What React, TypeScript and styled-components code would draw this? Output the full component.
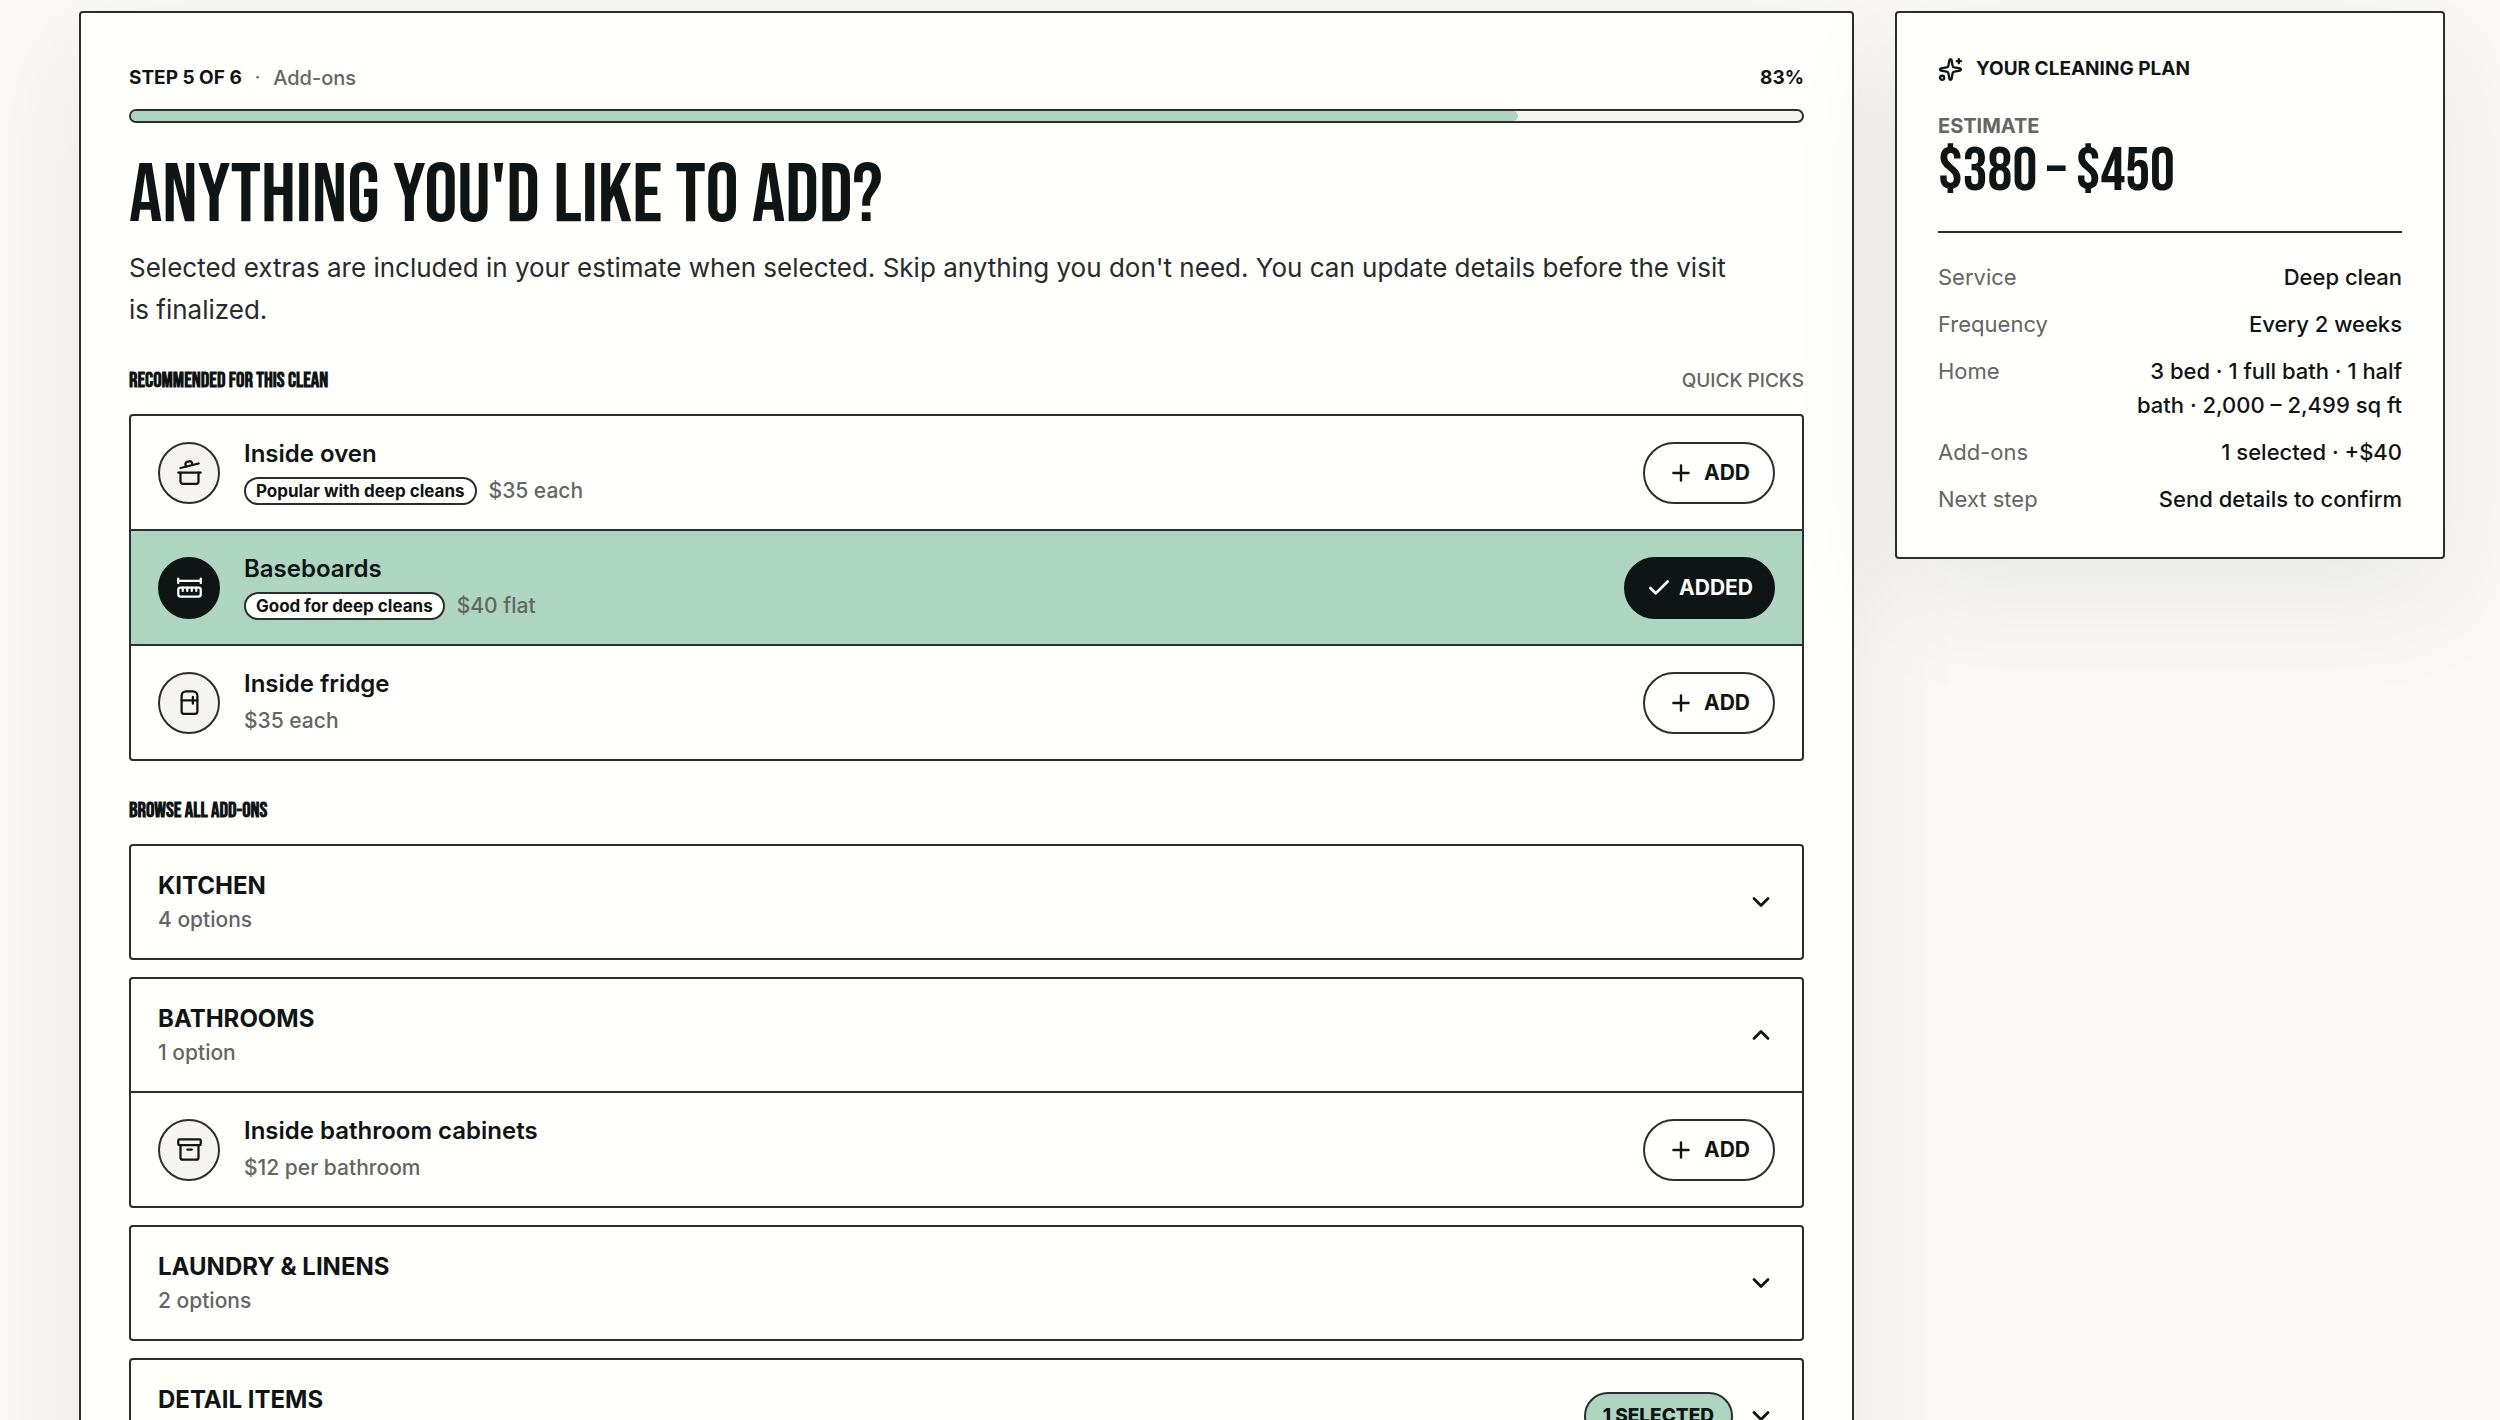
import React, { useState } from "react";
import styled, { createGlobalStyle } from "styled-components";
import {
  Archive,
  Check,
  ChevronDown,
  ChevronUp,
  CookingPot,
  Plus,
  Refrigerator,
  RulerDimensionLine,
  Sparkles,
  type LucideIcon,
} from "lucide-react";

const ink = "#0f1415";
const line = "#2a2e2f";
const muted = "#626664";
const paper = "#fffffc";
const sand = "#f6f4f0";
const mint = "#aed5bf";
const display = '"Bebas Neue", "Roboto Condensed", "Liberation Sans Narrow", sans-serif';

const GlobalStyle = createGlobalStyle`
  *, *::before, *::after { box-sizing: border-box; }
  body {
    margin: 0;
    background: #faf9f5;
    color: ${ink};
    font-family: Inter, "Liberation Sans", sans-serif;
    font-size: 20px;
    -webkit-font-smoothing: antialiased;
  }
  h1, h2, h3, p, ul, dl, dd { margin: 0; padding: 0; }
  ul { list-style: none; }
  button { font: inherit; color: inherit; cursor: pointer; }
`;

const Page = styled.div`
  display: grid;
  grid-template-columns: minmax(0, 1fr) 550px;
  gap: 41px;
  align-items: start;
  height: 100vh;
  overflow: hidden;
  padding: 11px 55px 0 79px;
`;

const Card = styled.section`
  background: ${paper};
  border: 2px solid ${line};
  border-radius: 4px;
  box-shadow: 0 38px 115px rgba(15, 20, 21, 0.08);
`;

const Wizard = styled(Card)`
  padding: 50px 48px 48px;
`;

const Between = styled.div`
  display: flex;
  align-items: center;
  justify-content: space-between;
`;

const StepRow = styled(Between)`
  line-height: 30px;
  font-size: 19px;
`;

const StepLabel = styled.div`
  display: flex;
  gap: 13px;
  color: ${muted};
`;

const StepName = styled.span`
  font-size: 20px;
  font-weight: 500;
`;

const Strong = styled.strong`
  font-weight: 700;
  color: ${ink};
`;

const Track = styled.div`
  height: 14px;
  margin-top: 16px;
  border: 2px solid ${line};
  border-radius: 7px;
  background: ${sand};
  overflow: hidden;
`;

const Fill = styled.div`
  height: 100%;
  border-radius: 7px;
  background: ${mint};
`;

const Title = styled.h1`
  margin-top: 29px;
  font-family: ${display};
  font-size: 83px;
  line-height: 88px;
  font-weight: 400;
`;

const Intro = styled.p`
  max-width: 1600px;
  margin-top: 7px;
  font-size: 26px;
  line-height: 42px;
  color: #272b2c;
`;

const SectionHead = styled(Between)`
  margin-top: 34px;
  margin-bottom: 17px;
  line-height: 32px;
`;

const SectionTitle = styled.h2`
  font-family: ${display};
  font-size: 21px;
  font-weight: 700;
`;

const SectionNote = styled.span`
  font-size: 19px;
  font-weight: 500;
  color: ${muted};
`;

const Panel = styled.div`
  border: 2px solid ${line};
  border-radius: 4px;
  overflow: hidden;
`;

const Stack = styled.div`
  display: grid;
  gap: 17px;
`;

const AddonRow = styled.li<{ $on?: boolean }>`
  display: flex;
  align-items: center;
  gap: 24px;
  min-height: 113px;
  padding: 0 27px;
  background: ${(p) => (p.$on ? mint : "transparent")};

  & + & {
    min-height: 115px;
    border-top: 2px solid ${line};
  }
`;

const IconDisc = styled.span<{ $on?: boolean }>`
  display: grid;
  place-items: center;
  flex: none;
  width: 62px;
  height: 62px;
  border: 2px solid ${(p) => (p.$on ? ink : line)};
  border-radius: 50%;
  background: ${(p) => (p.$on ? ink : sand)};
  color: ${(p) => (p.$on ? paper : ink)};
`;

const AddonText = styled.div`
  flex: 1;
  min-width: 0;
`;

const AddonName = styled.h3`
  font-size: 24px;
  line-height: 36px;
  font-weight: 600;
`;

const AddonMeta = styled.div`
  display: flex;
  align-items: center;
  gap: 12px;
  min-height: 37px;
`;

const Tag = styled.span`
  padding: 0 10px;
  border: 2px solid ${line};
  border-radius: 14px;
  background: ${paper};
  font-size: 17px;
  line-height: 24px;
  font-weight: 700;
`;

const Price = styled.span`
  font-size: 21px;
  font-weight: 500;
  color: ${muted};
`;

const AddButton = styled.button<{ $on?: boolean }>`
  display: flex;
  align-items: center;
  gap: ${(p) => (p.$on ? 7 : 10)}px;
  height: 62px;
  padding: 0 ${(p) => (p.$on ? 20 : 23)}px;
  border: 2px solid ${(p) => (p.$on ? ink : line)};
  border-radius: 31px;
  background: ${(p) => (p.$on ? ink : paper)};
  color: ${(p) => (p.$on ? paper : ink)};
  font-size: 21px;
  font-weight: 700;
`;

const GroupHeader = styled.button`
  display: flex;
  align-items: center;
  gap: 14px;
  width: 100%;
  height: 112px;
  padding: 0 27px;
  border: 0;
  background: transparent;
  text-align: left;
`;

const GroupText = styled.span`
  display: grid;
  flex: 1;
`;

const GroupName = styled.span`
  font-size: 24px;
  line-height: 35px;
  font-weight: 700;
`;

const GroupCount = styled.span`
  font-size: 21px;
  line-height: 34px;
  font-weight: 500;
  color: ${muted};
`;

const GroupItems = styled.ul`
  border-top: 2px solid ${line};
`;

const Selected = styled.span`
  padding: 0 17px;
  border: 2px solid ${line};
  border-radius: 24px;
  background: ${mint};
  font-size: 19px;
  line-height: 44px;
  font-weight: 800;
`;

const Summary = styled(Card).attrs({ as: "aside" })`
  padding: 41px;
`;

const SummaryTitle = styled.h2`
  display: flex;
  align-items: center;
  gap: 13px;
  font-size: 19px;
  line-height: 30px;
  font-weight: 700;
`;

const EstimateLabel = styled.p`
  margin-top: 27px;
  font-size: 20px;
  line-height: 30px;
  font-weight: 700;
  color: ${muted};
`;

const Estimate = styled.p`
  padding-bottom: 28px;
  border-bottom: 2px solid ${line};
  font-family: ${display};
  font-size: 62px;
  line-height: 62px;
  font-weight: 400;
`;

const Facts = styled.dl`
  display: grid;
  gap: 13px;
  margin-top: 27px;
`;

const Fact = styled.div`
  display: grid;
  grid-template-columns: auto minmax(0, 290px);
  justify-content: space-between;
  font-size: 22px;
  line-height: 34px;
`;

const FactName = styled.dt`
  color: ${muted};
`;

const FactValue = styled.dd`
  text-align: right;
  font-weight: 500;
`;

type Addon = { name: string; price: string; icon: LucideIcon; tag?: string };
type Group = { name: string; count: string; items: Addon[]; selected?: string };

const recommended: Addon[] = [
  { name: "Inside oven", price: "$35 each", icon: CookingPot, tag: "Popular with deep cleans" },
  { name: "Baseboards", price: "$40 flat", icon: RulerDimensionLine, tag: "Good for deep cleans" },
  { name: "Inside fridge", price: "$35 each", icon: Refrigerator },
];

const groups: Group[] = [
  { name: "KITCHEN", count: "4 options", items: [] },
  {
    name: "BATHROOMS",
    count: "1 option",
    items: [{ name: "Inside bathroom cabinets", price: "$12 per bathroom", icon: Archive }],
  },
  { name: "LAUNDRY & LINENS", count: "2 options", items: [] },
  { name: "DETAIL ITEMS", count: "5 options", items: [], selected: "1 SELECTED" },
];

const facts = [
  ["Service", "Deep clean"],
  ["Frequency", "Every 2 weeks"],
  ["Home", "3 bed · 1 full bath · 1 half bath · 2,000 – 2,499 sq ft"],
  ["Add-ons", "1 selected · +$40"],
  ["Next step", "Send details to confirm"],
];

function AddonItem({ addon, on, onToggle }: { addon: Addon; on: boolean; onToggle: () => void }) {
  const Icon = addon.icon;
  return (
    <AddonRow $on={on}>
      <IconDisc $on={on}>
        <Icon size={27} strokeWidth={2} />
      </IconDisc>
      <AddonText>
        <AddonName>{addon.name}</AddonName>
        <AddonMeta>
          {addon.tag && <Tag>{addon.tag}</Tag>}
          <Price>{addon.price}</Price>
        </AddonMeta>
      </AddonText>
      <AddButton type="button" $on={on} aria-pressed={on} onClick={onToggle}>
        {on ? <Check size={26} strokeWidth={2.5} /> : <Plus size={26} strokeWidth={2.2} />}
        {on ? "ADDED" : "ADD"}
      </AddButton>
    </AddonRow>
  );
}

export default function App() {
  const [picked, setPicked] = useState<string[]>(["Baseboards"]);
  const [open, setOpen] = useState("BATHROOMS");
  const progress = 83;

  const toggle = (name: string) =>
    setPicked((list) => (list.includes(name) ? list.filter((n) => n !== name) : [...list, name]));

  const renderAddon = (addon: Addon) => (
    <AddonItem
      key={addon.name}
      addon={addon}
      on={picked.includes(addon.name)}
      onToggle={() => toggle(addon.name)}
    />
  );

  return (
    <>
      <GlobalStyle />
      <Page>
        <Wizard>
          <StepRow>
            <StepLabel>
              <Strong>STEP 5 OF 6</Strong>
              <span>·</span>
              <StepName>Add-ons</StepName>
            </StepLabel>
            <Strong>{progress}%</Strong>
          </StepRow>
          <Track role="progressbar" aria-label="Progress" aria-valuenow={progress}>
            <Fill style={{ width: `${progress}%` }} />
          </Track>

          <Title>ANYTHING YOU'D LIKE TO ADD?</Title>
          <Intro>
            Selected extras are included in your estimate when selected. Skip anything you don't
            need. You can update details before the visit is finalized.
          </Intro>

          <SectionHead>
            <SectionTitle>RECOMMENDED FOR THIS CLEAN</SectionTitle>
            <SectionNote>QUICK PICKS</SectionNote>
          </SectionHead>
          <Panel as="ul">{recommended.map(renderAddon)}</Panel>

          <SectionHead>
            <SectionTitle>BROWSE ALL ADD-ONS</SectionTitle>
          </SectionHead>
          <Stack>
            {groups.map((group) => {
              const expanded = open === group.name;
              const Chevron = expanded ? ChevronUp : ChevronDown;
              return (
                <Panel key={group.name}>
                  <GroupHeader
                    type="button"
                    aria-expanded={expanded}
                    onClick={() => setOpen(expanded ? "" : group.name)}
                  >
                    <GroupText>
                      <GroupName>{group.name}</GroupName>
                      <GroupCount>{group.count}</GroupCount>
                    </GroupText>
                    {group.selected && <Selected>{group.selected}</Selected>}
                    <Chevron size={28} strokeWidth={2.4} />
                  </GroupHeader>
                  {expanded && group.items.length > 0 && (
                    <GroupItems>{group.items.map(renderAddon)}</GroupItems>
                  )}
                </Panel>
              );
            })}
          </Stack>
        </Wizard>

        <Summary>
          <SummaryTitle>
            <Sparkles size={25} strokeWidth={2.2} />
            YOUR CLEANING PLAN
          </SummaryTitle>
          <EstimateLabel>ESTIMATE</EstimateLabel>
          <Estimate>$380 – $450</Estimate>
          <Facts>
            {facts.map(([name, value]) => (
              <Fact key={name}>
                <FactName>{name}</FactName>
                <FactValue>{value}</FactValue>
              </Fact>
            ))}
          </Facts>
        </Summary>
      </Page>
    </>
  );
}
